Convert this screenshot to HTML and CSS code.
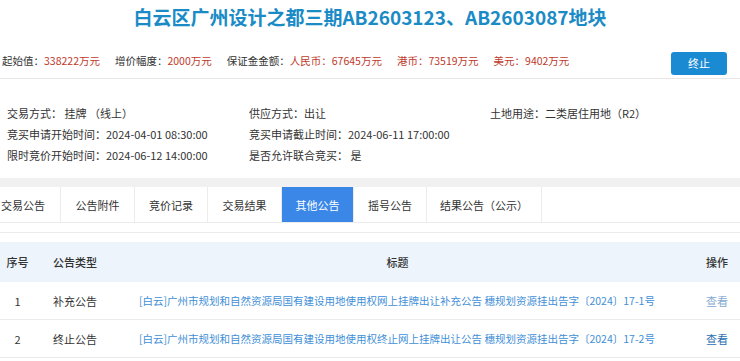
FILE: index.html
```html
<!DOCTYPE html>
<html lang="zh-CN">
	<head>
		<meta charset="UTF-8" />
		<meta name="viewport" content="width=device-width, initial-scale=1.0" />
		<title>白云区广州设计之都三期地块</title>
		<link rel="stylesheet" href="styles.css">
	</head>
	<body>
		<h1 class="title">白云区广州设计之都三期AB2603123、AB2603087地块</h1>
		<div class="price-bar">
			<div class="prices">
				<span class="item">起始值：<em>338222万元</em></span>
				<span class="item">增价幅度：<em>2000万元</em></span>
				<span class="item">保证金金额：<em>人民币：67645万元</em></span>
				<span class="item"><em>港币：73519万元</em></span>
				<span class="item"><em>美元：9402万元</em></span>
			</div>
			<button class="btn-stop">终止</button>
		</div>
		<div class="info">
			<div>交易方式：&nbsp;挂牌 （线上）</div>
			<div>供应方式：出让</div>
			<div>土地用途：二类居住用地（R2）</div>
			<div>竞买申请开始时间：2024-04-01 08:30:00</div>
			<div>竞买申请截止时间：2024-06-11 17:00:00</div>
			<div></div>
			<div>限时竞价开始时间：2024-06-12 14:00:00</div>
			<div>是否允许联合竞买：&nbsp;是</div>
			<div></div>
		</div>
		<div class="band"></div>
		<ul class="tabs">
			<li class="w75">交易公告</li>
			<li class="w74">公告附件</li>
			<li class="w73">竞价记录</li>
			<li class="w74">交易结果</li>
			<li class="w72 active">其他公告</li>
			<li class="w73">摇号公告</li>
			<li class="w115">结果公告（公示）</li>
		</ul>
		<div class="panel">
			<table class="list">
				<colgroup>
					<col style="width: 35px" />
					<col style="width: 100px" />
					<col style="width: 525px" />
					<col style="width: 80px" />
				</colgroup>
				<thead>
					<tr>
						<th class="c-no">序号</th>
						<th class="c-type">公告类型</th>
						<th class="c-title">标题</th>
						<th class="c-op">操作</th>
					</tr>
				</thead>
				<tbody>
					<tr>
						<td class="c-no">1</td>
						<td class="c-type">补充公告</td>
						<td class="c-link"><a>[白云]广州市规划和自然资源局国有建设用地使用权网上挂牌出让补充公告 穗规划资源挂出告字〔2024〕17-1号</a></td>
						<td class="c-op"><a class="view faded">查看</a></td>
					</tr>
					<tr>
						<td class="c-no">2</td>
						<td class="c-type">终止公告</td>
						<td class="c-link"><a>[白云]广州市规划和自然资源局国有建设用地使用权终止网上挂牌出让公告 穗规划资源挂出告字〔2024〕17-2号</a></td>
						<td class="c-op"><a class="view">查看</a></td>
					</tr>
				</tbody>
			</table>
		</div>
	</body>
</html>
```

FILE: styles.css
```css
body {
	margin: 0;
	font-family: 'Noto Sans CJK SC', 'Noto Sans', sans-serif;
	font-size: 11px;
	color: #333;
	background: #fff;
	overflow: hidden;
}
.title {
	margin: 0;
	padding: 4px 0 0 0;
	height: 30px;
	line-height: 26px;
	text-align: center;
	font-size: 19px;
	font-weight: 700;
	color: #1b8bc6;
}
.price-bar {
	display: flex;
	justify-content: space-between;
	align-items: center;
	height: 44px;
	padding: 0 13px 0 2px;
	border-bottom: 1px solid #e6e6e6;
	font-size: 10.5px;
}
.prices {
	display: flex;
	gap: 15px;
	padding-top: 9px;
}
.prices em {
	font-style: normal;
	color: #c0392b;
}
.btn-stop {
	width: 56px;
	height: 23px;
	margin-top: 14px;
	border: none;
	border-radius: 3px;
	background: #1a8ad3;
	color: #fff;
	font-family: inherit;
	font-size: 11px;
}
.info {
	display: grid;
	grid-template-columns: 242px 241px 1fr;
	grid-auto-rows: 21px;
	align-items: center;
	padding: 23px 0 13px 7px;
	font-size: 11px;
}
.band {
	height: 9px;
	background: #f1f1f1;
}
.tabs {
	display: flex;
	box-sizing: border-box;
	margin: 0 0 0 -14px;
	padding: 0;
	list-style: none;
	height: 36px;
	border-bottom: 1px solid #ececec;
}
.tabs li {
	box-sizing: border-box;
	display: flex;
	align-items: center;
	justify-content: center;
	border-right: 1px solid #ececec;
	font-size: 11px;
	color: #333;
}
.tabs li.w72 { width: 72px; }
.tabs li.w73 { width: 73px; }
.tabs li.w74 { width: 74px; }
.tabs li.w75 { width: 75px; }
.tabs li.w115 { width: 115px; }
.tabs li.active {
	background: #3a87e8;
	color: #fff;
}
.panel {
	margin-top: 9px;
	border-top: 1px solid #ececec;
	padding-top: 9px;
}
.list {
	width: 740px;
	border-collapse: collapse;
	table-layout: fixed;
}
.list th,
.list td {
	padding-top: 0;
	padding-bottom: 0;
	line-height: 16px;
}
.list th {
	height: 40px;
	background: #edf4fc;
	font-weight: 500;
	color: #333;
	font-size: 11px;
}
.list td {
	height: 37px;
	border-bottom: 1px solid #ececec;
	font-size: 11px;
	white-space: nowrap;
}
.c-no {
	text-align: center;
	padding-left: 1px;
}
.c-type {
	text-align: left;
	padding-left: 18px;
}
.c-title {
	text-align: center;
}
.c-link {
	padding-left: 4px;
	overflow: hidden;
}
.c-link a {
	color: #3f8fd8;
	font-size: 10.5px;
}
.c-op {
	text-align: right;
	padding-right: 12px;
}
.view {
	color: #2a6eb0;
}
.view.faded {
	color: #86abd0;
}
```
